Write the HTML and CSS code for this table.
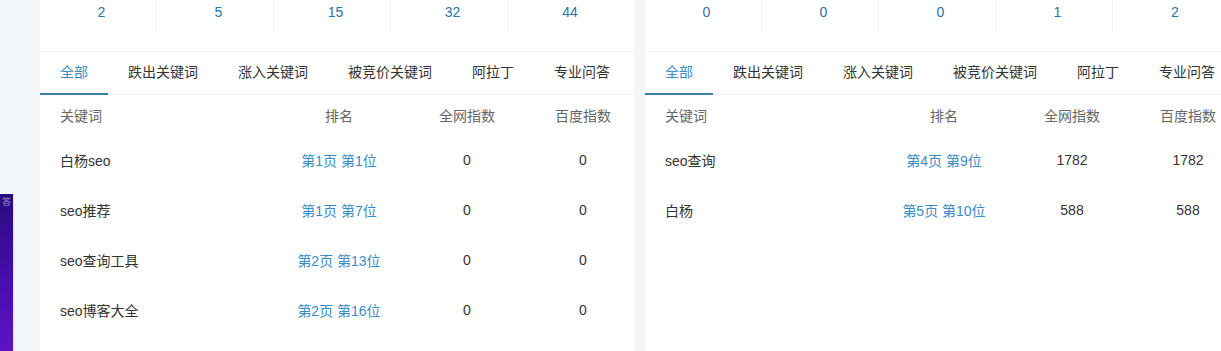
FILE: index.html
```html
<!DOCTYPE html>
<html lang="zh">
<head>
<meta charset="utf-8">
<link rel="stylesheet" href="styles.css">
</head>
<body>
<div class="side-widget"><span class="side-text">答</span></div>
<div class="page">
  <section class="panel panel-left">
    <div class="stats">
      <div class="stat">2</div>
      <div class="stat">5</div>
      <div class="stat">15</div>
      <div class="stat">32</div>
      <div class="stat">44</div>
    </div>
    <div class="tabs">
      <div class="tab active">全部</div>
      <div class="tab">跌出关键词</div>
      <div class="tab">涨入关键词</div>
      <div class="tab">被竞价关键词</div>
      <div class="tab">阿拉丁</div>
      <div class="tab">专业问答</div>
    </div>
    <div class="table">
      <div class="row head"><span class="kw">关键词</span><span class="c">排名</span><span class="c">全网指数</span><span class="c">百度指数</span></div>
      <div class="row"><span class="kw">白杨seo</span><span class="c rank">第1页 第1位</span><span class="c">0</span><span class="c">0</span></div>
      <div class="row"><span class="kw">seo推荐</span><span class="c rank">第1页 第7位</span><span class="c">0</span><span class="c">0</span></div>
      <div class="row"><span class="kw">seo查询工具</span><span class="c rank">第2页 第13位</span><span class="c">0</span><span class="c">0</span></div>
      <div class="row"><span class="kw">seo博客大全</span><span class="c rank">第2页 第16位</span><span class="c">0</span><span class="c">0</span></div>
    </div>
  </section>
  <section class="panel">
    <div class="stats">
      <div class="stat">0</div>
      <div class="stat">0</div>
      <div class="stat">0</div>
      <div class="stat">1</div>
      <div class="stat">2</div>
    </div>
    <div class="tabs">
      <div class="tab active">全部</div>
      <div class="tab">跌出关键词</div>
      <div class="tab">涨入关键词</div>
      <div class="tab">被竞价关键词</div>
      <div class="tab">阿拉丁</div>
      <div class="tab">专业问答</div>
    </div>
    <div class="table">
      <div class="row head"><span class="kw">关键词</span><span class="c">排名</span><span class="c">全网指数</span><span class="c">百度指数</span></div>
      <div class="row"><span class="kw">seo查询</span><span class="c rank">第4页 第9位</span><span class="c">1782</span><span class="c">1782</span></div>
      <div class="row"><span class="kw">白杨</span><span class="c rank">第5页 第10位</span><span class="c">588</span><span class="c">588</span></div>
    </div>
  </section>
</div>
</body>
</html>
```

FILE: styles.css
```css
* { box-sizing: border-box; }
html, body {
  margin: 0;
  padding: 0;
  height: 351px;
  overflow: hidden;
  background: #f3f6f9;
  font-family: "Liberation Sans", "Noto Sans CJK SC", sans-serif;
  font-size: 14px;
  color: #333;
}
.page {
  display: flex;
  gap: 11px;
  padding-left: 40px;
  height: 351px;
  width: 100%;
  overflow: hidden;
}
.panel {
  flex: 0 1 594px;
  min-width: 0;
  overflow: hidden;
  background: #fff;
  height: 351px;
}
.panel-left { flex-shrink: 0; }
.stats {
  display: flex;
  height: 52px;
  border-bottom: 1px solid #f0f2f4;
}
.stat {
  flex: 0 0 117px;
  height: 32px;
  line-height: 24px;
  padding-left: 7px;
  text-align: center;
  color: #2a74a8;
  font-size: 14px;
  border-right: 1px solid #eef0f2;
}
.stat:last-child { border-right: none; }
.tabs {
  display: flex;
  height: 43px;
  border-bottom: 1px solid #e9edf0;
}
.tab {
  flex: 0 0 auto;
  padding: 0 20px;
  line-height: 41px;
  color: #333;
  white-space: nowrap;
}
.tab.active {
  color: #3a8cc4;
  border-bottom: 2px solid #3a7ea8;
  height: 43px;
}
.table { padding: 0 20px; }
.row {
  display: grid;
  grid-template-columns: 236px 86px 170px 62px;
  height: 50px;
  align-items: center;
  white-space: nowrap;
}
.row.head {
  height: 40px;
  color: #666;
}
.c { text-align: center; }
.rank { color: #3a8cc6; }
.side-widget {
  position: fixed;
  left: 0;
  top: 194px;
  width: 14px;
  height: 157px;
  background: linear-gradient(180deg, #2a0b80 0%, #4a0fb0 60%, #5e12c6 100%);
  border-right: 1px solid #e9d8f8;
  z-index: 5;
}
.side-text {
  display: block;
  color: rgba(255,255,255,0.55);
  font-size: 9px;
  line-height: 10px;
  padding: 3px 0 0 2px;
}
```
